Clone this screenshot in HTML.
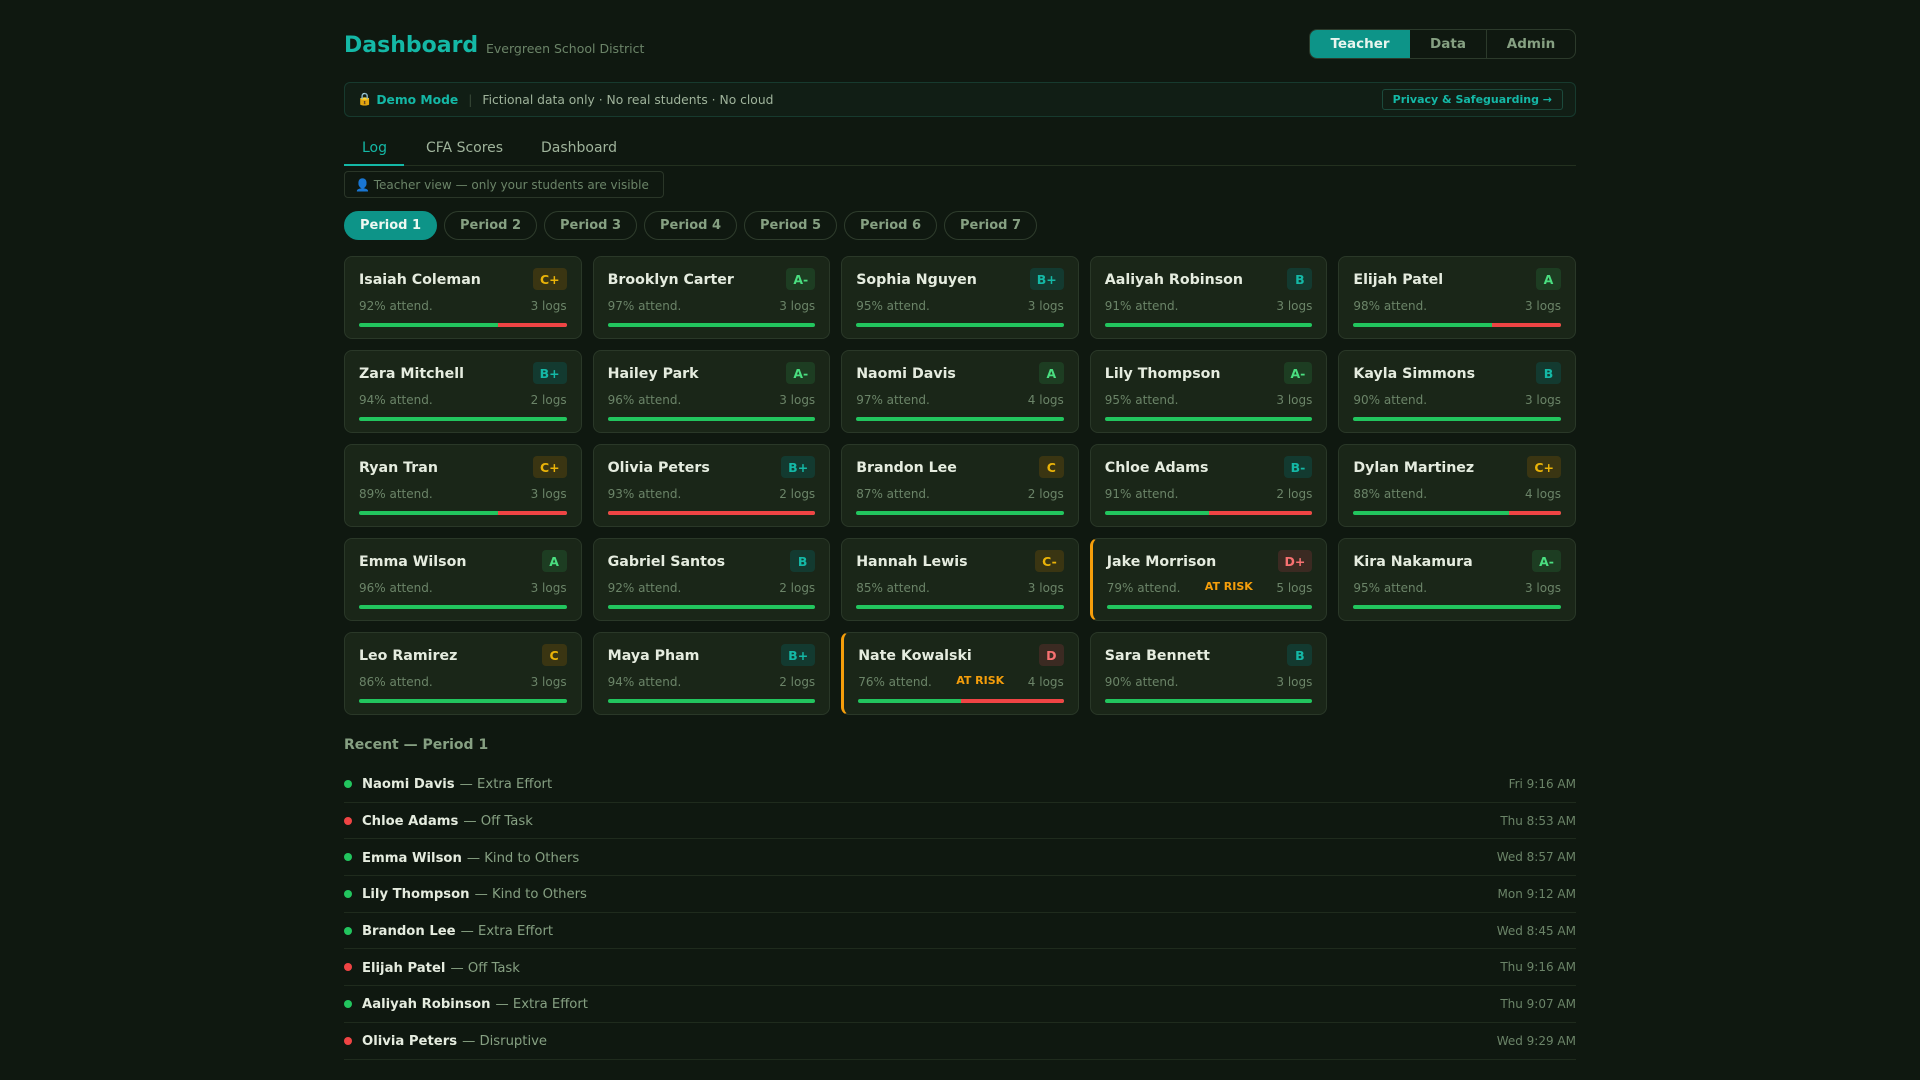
<!DOCTYPE html>
<html><head><meta charset="utf-8"><style>
*{box-sizing:border-box;margin:0;padding:0}
body{width:1920px;height:1080px;background:#0f1810;font-family:"DejaVu Sans","Liberation Sans",sans-serif;color:#e5ecdf;overflow:hidden}
.wrap{position:absolute;left:344px;width:1232px;top:0}
.title{position:absolute;top:33px;left:0;font-size:22px;font-weight:bold;color:#14b8a6}
.sub{position:absolute;top:41px;left:142px;font-size:12.5px;color:#6b8468}
.toggle{position:absolute;left:965px;top:29px;width:267px;height:30px;border:1px solid #2c3a2b;border-radius:8px;display:flex;overflow:hidden;font-size:13.5px;font-weight:bold}
.toggle div{display:flex;align-items:center;justify-content:center;color:#86a082}
.toggle .on{background:#0d9488;color:#e8f5ee;width:100px}
.demo{position:absolute;top:82px;left:0;width:1232px;height:35px;border:1px solid #173a2e;background:#111e15;border-radius:6px;font-size:12.3px;display:flex;align-items:center;padding-left:12px;color:#9fb39b}
.demo b{color:#14b8a6;margin-left:4px}
.demo .sep{color:#3a4a38;margin:0 10px}
.priv{position:absolute;right:12px;top:6px;height:21px;border:1px solid #1c4a3c;border-radius:3px;padding:0 10px;font-size:11px;font-weight:bold;color:#14b8a6;display:flex;align-items:center}
.tabs{position:absolute;top:137px;left:0;width:1232px;height:29px;border-bottom:1px solid #23301f;font-size:14px;color:#9fb39b}
.tabs span{position:absolute;top:3px}
.tabs .act{color:#14b8a6}
.tabs .ul{position:absolute;left:0;top:27px;width:60px;height:2px;background:#14b8a6}
.tv{position:absolute;top:171px;left:0;width:320px;height:27px;border:1px solid #2a3628;border-radius:4px;font-size:12px;color:#6b8468;display:flex;align-items:center;padding-left:10px}
.pills{position:absolute;top:211px;left:0;display:flex;gap:7px}
.pill{height:29px;width:93px;border:1px solid #2e3c2c;border-radius:15px;font-size:13px;font-weight:bold;color:#86a082;display:flex;align-items:center;justify-content:center}
.pill.on{background:#0d9488;border-color:#0d9488;color:#eef8f2}
.grid{position:absolute;top:256px;left:0;display:grid;grid-template-columns:repeat(5,237.6px);column-gap:11px;row-gap:11px}
.card{height:83px;background:#1a2618;border:1px solid #2a3828;border-radius:8px;position:relative;padding:0 14px}
.card.risk{border-left:3px solid #f59e0b;padding-left:14px}
.nm{position:absolute;top:15px;left:14px;font-size:14.2px;font-weight:bold;color:#e5ecdf}
.gr{position:absolute;top:11px;right:14px;height:22px;min-width:25px;padding:0 7px;border-radius:4px;font-size:12.5px;font-weight:bold;display:flex;align-items:center;justify-content:center}
.gy{background:#3a3512;color:#eab308}.gg{background:#1d3d22;color:#4ade80}.gt{background:#133a30;color:#14b8a6}.gr2{background:#3b2a22;color:#f87171}
.at{position:absolute;top:42px;left:14px;font-size:12px;color:#6b8468}
.lg{position:absolute;top:42px;right:14px;font-size:12px;color:#6b8468}
.rk{position:absolute;top:41px;left:112px;font-size:11px;font-weight:bold;color:#f59e0b}
.bar{position:absolute;left:14px;right:14px;top:66px;height:4px;border-radius:2px;background:#22c55e;overflow:hidden}
.bar i{position:absolute;right:0;top:0;bottom:0;background:#ef4444}
.rh{position:absolute;top:737px;left:0;font-size:14px;font-weight:bold;color:#86a082}
.list{position:absolute;top:766px;left:0;width:1232px}
.row{height:36.7px;border-bottom:1px solid #1f2b1d;display:flex;align-items:center;font-size:13.2px;position:relative}
.row b,.row .t{position:relative;top:1px}
.dot{width:8px;height:8px;border-radius:50%;margin-right:10px}
.row b{color:#e5ecdf}
.row .t{color:#86a082;margin-left:5px}
.row .d{position:absolute;right:0;color:#6b8468;font-size:12px}
</style></head><body><div class="wrap">
<div class="title">Dashboard</div><div class="sub">Evergreen School District</div>
<div class="toggle"><div class="on">Teacher</div><div style="width:77px;border-right:1px solid #2c3a2b">Data</div><div style="flex:1">Admin</div></div>
<div class="demo">🔒<b>Demo Mode</b><span class="sep">|</span>Fictional data only · No real students · No cloud<div class="priv">Privacy &amp; Safeguarding →</div></div>
<div class="tabs"><span class="act" style="left:18px">Log</span><span style="left:82px">CFA Scores</span><span style="left:197px">Dashboard</span><div class="ul"></div></div>
<div class="tv">👤 Teacher view — only your students are visible</div>
<div class="pills"><div class="pill on">Period 1</div><div class="pill">Period 2</div><div class="pill">Period 3</div><div class="pill">Period 4</div><div class="pill">Period 5</div><div class="pill">Period 6</div><div class="pill">Period 7</div></div>
<div class="grid">
<div class="card"><div class="nm">Isaiah Coleman</div><div class="gr gy">C+</div><div class="at">92% attend.</div><div class="lg">3 logs</div><div class="bar"><i style="width:33%"></i></div></div>
<div class="card"><div class="nm">Brooklyn Carter</div><div class="gr gg">A-</div><div class="at">97% attend.</div><div class="lg">3 logs</div><div class="bar"></div></div>
<div class="card"><div class="nm">Sophia Nguyen</div><div class="gr gt">B+</div><div class="at">95% attend.</div><div class="lg">3 logs</div><div class="bar"></div></div>
<div class="card"><div class="nm">Aaliyah Robinson</div><div class="gr gt">B</div><div class="at">91% attend.</div><div class="lg">3 logs</div><div class="bar"></div></div>
<div class="card"><div class="nm">Elijah Patel</div><div class="gr gg">A</div><div class="at">98% attend.</div><div class="lg">3 logs</div><div class="bar"><i style="width:33%"></i></div></div>
<div class="card"><div class="nm">Zara Mitchell</div><div class="gr gt">B+</div><div class="at">94% attend.</div><div class="lg">2 logs</div><div class="bar"></div></div>
<div class="card"><div class="nm">Hailey Park</div><div class="gr gg">A-</div><div class="at">96% attend.</div><div class="lg">3 logs</div><div class="bar"></div></div>
<div class="card"><div class="nm">Naomi Davis</div><div class="gr gg">A</div><div class="at">97% attend.</div><div class="lg">4 logs</div><div class="bar"></div></div>
<div class="card"><div class="nm">Lily Thompson</div><div class="gr gg">A-</div><div class="at">95% attend.</div><div class="lg">3 logs</div><div class="bar"></div></div>
<div class="card"><div class="nm">Kayla Simmons</div><div class="gr gt">B</div><div class="at">90% attend.</div><div class="lg">3 logs</div><div class="bar"></div></div>
<div class="card"><div class="nm">Ryan Tran</div><div class="gr gy">C+</div><div class="at">89% attend.</div><div class="lg">3 logs</div><div class="bar"><i style="width:33%"></i></div></div>
<div class="card"><div class="nm">Olivia Peters</div><div class="gr gt">B+</div><div class="at">93% attend.</div><div class="lg">2 logs</div><div class="bar"><i style="width:100%"></i></div></div>
<div class="card"><div class="nm">Brandon Lee</div><div class="gr gy">C</div><div class="at">87% attend.</div><div class="lg">2 logs</div><div class="bar"></div></div>
<div class="card"><div class="nm">Chloe Adams</div><div class="gr gt">B-</div><div class="at">91% attend.</div><div class="lg">2 logs</div><div class="bar"><i style="width:50%"></i></div></div>
<div class="card"><div class="nm">Dylan Martinez</div><div class="gr gy">C+</div><div class="at">88% attend.</div><div class="lg">4 logs</div><div class="bar"><i style="width:25%"></i></div></div>
<div class="card"><div class="nm">Emma Wilson</div><div class="gr gg">A</div><div class="at">96% attend.</div><div class="lg">3 logs</div><div class="bar"></div></div>
<div class="card"><div class="nm">Gabriel Santos</div><div class="gr gt">B</div><div class="at">92% attend.</div><div class="lg">2 logs</div><div class="bar"></div></div>
<div class="card"><div class="nm">Hannah Lewis</div><div class="gr gy">C-</div><div class="at">85% attend.</div><div class="lg">3 logs</div><div class="bar"></div></div>
<div class="card risk"><div class="nm">Jake Morrison</div><div class="gr gr2">D+</div><div class="at">79% attend.</div><div class="rk">AT RISK</div><div class="lg">5 logs</div><div class="bar"></div></div>
<div class="card"><div class="nm">Kira Nakamura</div><div class="gr gg">A-</div><div class="at">95% attend.</div><div class="lg">3 logs</div><div class="bar"></div></div>
<div class="card"><div class="nm">Leo Ramirez</div><div class="gr gy">C</div><div class="at">86% attend.</div><div class="lg">3 logs</div><div class="bar"></div></div>
<div class="card"><div class="nm">Maya Pham</div><div class="gr gt">B+</div><div class="at">94% attend.</div><div class="lg">2 logs</div><div class="bar"></div></div>
<div class="card risk"><div class="nm">Nate Kowalski</div><div class="gr gr2">D</div><div class="at">76% attend.</div><div class="rk">AT RISK</div><div class="lg">4 logs</div><div class="bar"><i style="width:50%"></i></div></div>
<div class="card"><div class="nm">Sara Bennett</div><div class="gr gt">B</div><div class="at">90% attend.</div><div class="lg">3 logs</div><div class="bar"></div></div>
</div>
<div class="rh">Recent — Period 1</div>
<div class="list">
<div class="row"><span class="dot" style="background:#22c55e"></span><b>Naomi Davis</b><span class="t">— Extra Effort</span><span class="d">Fri 9:16 AM</span></div>
<div class="row"><span class="dot" style="background:#ef4444"></span><b>Chloe Adams</b><span class="t">— Off Task</span><span class="d">Thu 8:53 AM</span></div>
<div class="row"><span class="dot" style="background:#22c55e"></span><b>Emma Wilson</b><span class="t">— Kind to Others</span><span class="d">Wed 8:57 AM</span></div>
<div class="row"><span class="dot" style="background:#22c55e"></span><b>Lily Thompson</b><span class="t">— Kind to Others</span><span class="d">Mon 9:12 AM</span></div>
<div class="row"><span class="dot" style="background:#22c55e"></span><b>Brandon Lee</b><span class="t">— Extra Effort</span><span class="d">Wed 8:45 AM</span></div>
<div class="row"><span class="dot" style="background:#ef4444"></span><b>Elijah Patel</b><span class="t">— Off Task</span><span class="d">Thu 9:16 AM</span></div>
<div class="row"><span class="dot" style="background:#22c55e"></span><b>Aaliyah Robinson</b><span class="t">— Extra Effort</span><span class="d">Thu 9:07 AM</span></div>
<div class="row"><span class="dot" style="background:#ef4444"></span><b>Olivia Peters</b><span class="t">— Disruptive</span><span class="d">Wed 9:29 AM</span></div>
</div>
</div></body></html>
